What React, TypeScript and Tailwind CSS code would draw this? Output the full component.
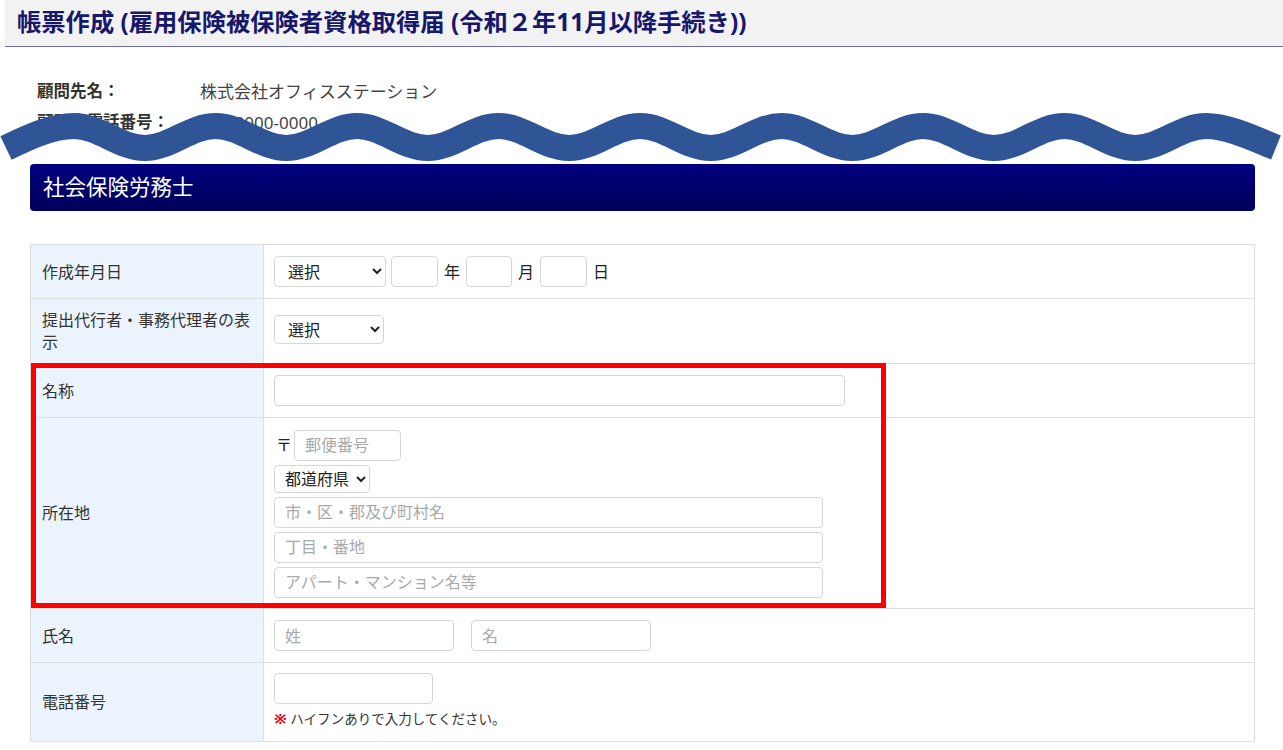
import React from 'react';

const FONT = '"Noto Sans", "Noto Sans CJK JP", sans-serif';

// wave: peaks every 141.5px, stroke centre between y=26 (peak) and y=48 (trough)
const buildWave = () => {
  const top = 26;
  const bottom = 48;
  const half = 70.75;
  let d = `M 6 48 C 28 37.4, 52 ${top}, 74 ${top}`;
  let x = 74;
  let atPeak = true;
  while (x + half <= 1207) {
    const y0 = atPeak ? top : bottom;
    const y1 = atPeak ? bottom : top;
    d += ` C ${(x + half * 0.364).toFixed(1)} ${y0}, ${(x + half * 0.636).toFixed(1)} ${y1}, ${(x + half).toFixed(1)} ${y1}`;
    x += half;
    atPeak = !atPeak;
  }
  d += ` C ${(x + 22).toFixed(1)} ${top}, 1256 39.5, 1276 47.5`;
  return d;
};

const wavePath = buildWave();

const inputCls =
  'h-[31px] rounded-[4px] border border-[#d6d6d6] bg-white px-[10px] text-[16px] text-[#333] placeholder:text-[#a9a9a9] outline-none';
const selectCls =
  'rounded-[4px] border border-[#d6d6d6] bg-white pl-[9px] pr-[4px] text-[16px] text-[#222] outline-none';

const Label: React.FC<{ children: React.ReactNode; h: string }> = ({ children, h }) => (
  <td className={`${h} w-[233px] border border-[#dedede] bg-[#ebf4fc] pl-[11px] pr-[10px] align-middle text-[16px] leading-[22px] text-[#333]`}>
    {children}
  </td>
);

const Cell: React.FC<{ children: React.ReactNode }> = ({ children }) => (
  <td className="border border-[#dedede] bg-white pl-[10px] align-middle text-[16px] text-[#222]">{children}</td>
);

const App: React.FC = () => {
  return (
    <div className="min-h-[750px] bg-white" style={{ fontFamily: FONT }}>
      {/* page title */}
      <div className="ml-[5px] flex h-[47px] items-center border-b border-[#6f6fb8] bg-[#f2f2f2] pl-[12px]">
        <h1 className="-mt-[2px] text-[24.3px] font-bold text-[#17176b]">
          帳票作成 (雇用保険被保険者資格取得届 (令和２年11月以降手続き))
        </h1>
      </div>

      {/* client info, partly hidden by the wave */}
      <div className="relative pt-[29px]">
        <div className="flex h-[31px] items-center pl-[37px] text-[16.5px]">
          <span className="w-[163px] font-bold text-[#333]">顧問先名：</span>
          <span className="text-[17px] text-[#444]">株式会社オフィスステーション</span>
        </div>
        <div className="flex h-[31px] items-center pl-[37px] text-[16.5px]">
          <span className="w-[163px] font-bold text-[#333]">顧問先電話番号：</span>
          <span className="text-[17px] text-[#444]">000-0000-0000</span>
        </div>
        <svg className="absolute left-0 top-[53px]" width="1283" height="80" viewBox="0 0 1283 80">
          <path d={wavePath} fill="none" stroke="#2f5597" strokeWidth="26" />
        </svg>
      </div>

      <div className="px-[30px] pt-[26px]">
        {/* section heading */}
        <div className="flex h-[47px] w-[1225px] items-center rounded-[4px] bg-gradient-to-b from-[#000080] to-[#00005a] pl-[13px] text-[21.5px] text-white">
          社会保険労務士
        </div>

        {/* form table */}
        <div className="relative mt-[33px] w-[1225px]">
          <table className="w-full border-collapse">
            <tbody>
              <tr>
                <Label h="h-[54px]">作成年月日</Label>
                <Cell>
                  <div className="flex items-center">
                    <select className={`${selectCls} h-[31px] w-[112px]`} defaultValue="">
                      <option value="">選択</option>
                    </select>
                    <input className={`${inputCls} ml-[5px] w-[47px]`} />
                    <span className="ml-[6px] mr-[6px]">年</span>
                    <input className={`${inputCls} w-[46px]`} />
                    <span className="ml-[6px] mr-[6px]">月</span>
                    <input className={`${inputCls} w-[47px]`} />
                    <span className="ml-[6px]">日</span>
                  </div>
                </Cell>
              </tr>
              <tr>
                <Label h="h-[65px]">提出代行者・事務代理者の表示</Label>
                <Cell>
                  <select className={`${selectCls} -mt-[3px] h-[29px] w-[110px]`} defaultValue="">
                    <option value="">選択</option>
                  </select>
                </Cell>
              </tr>
              <tr>
                <Label h="h-[54px]">名称</Label>
                <Cell>
                  <input className={`${inputCls} w-[571px]`} />
                </Cell>
              </tr>
              <tr>
                <Label h="h-[191px]">所在地</Label>
                <Cell>
                  <div className="flex flex-col gap-[4px] pt-[1px]">
                    <div className="flex items-center">
                      <span className="ml-[2px] mr-[2px] text-[16px]">〒</span>
                      <input className={`${inputCls} h-[30px] w-[107px]`} placeholder="郵便番号" />
                    </div>
                    <select className={`${selectCls} h-[28px] w-[96px] !pl-[6px] !pr-0`} defaultValue="">
                      <option value="">都道府県</option>
                    </select>
                    <input className={`${inputCls} w-[549px]`} placeholder="市・区・郡及び町村名" />
                    <input className={`${inputCls} w-[549px]`} placeholder="丁目・番地" />
                    <input className={`${inputCls} w-[549px]`} placeholder="アパート・マンション名等" />
                  </div>
                </Cell>
              </tr>
              <tr>
                <Label h="h-[54px]">氏名</Label>
                <Cell>
                  <div className="flex items-center gap-[17px]">
                    <input className={`${inputCls} h-[30px] w-[180px]`} placeholder="姓" />
                    <input className={`${inputCls} h-[30px] w-[180px]`} placeholder="名" />
                  </div>
                </Cell>
              </tr>
              <tr>
                <Label h="h-[79px]">電話番号</Label>
                <Cell>
                  <div className="flex flex-col pb-[3px]">
                    <input className={`${inputCls} w-[159px]`} />
                    <p className="mt-[5px] text-[13.5px] leading-[18px] text-[#333]">
                      <span className="text-[15px] font-bold text-[#e60012]">※</span> ハイフンありで入力してください。
                    </p>
                  </div>
                </Cell>
              </tr>
            </tbody>
          </table>

          {/* highlight frame */}
          <div className="pointer-events-none absolute left-[1px] top-[119px] h-[245px] w-[855px] border-[5px] border-[#ff0000]" />
        </div>
      </div>
    </div>
  );
};

export default App;
